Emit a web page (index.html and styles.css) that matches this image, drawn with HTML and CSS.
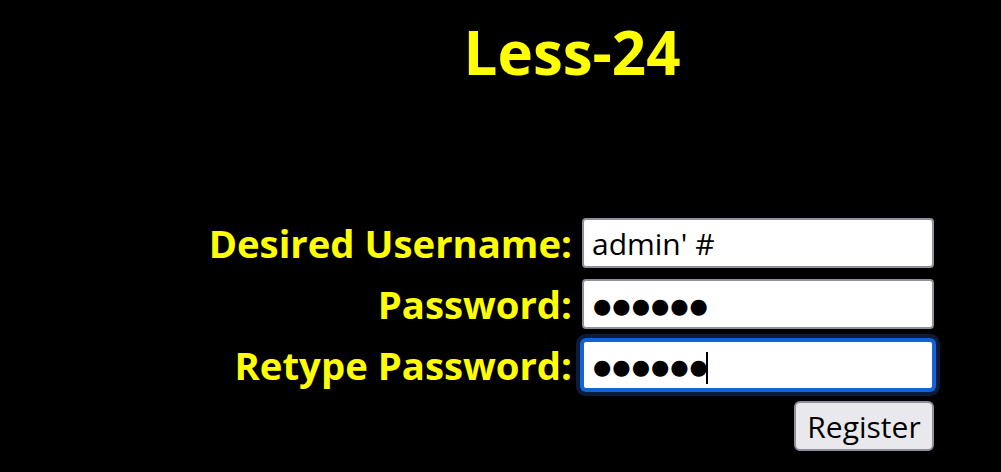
FILE: index.html
```html
<!DOCTYPE html>
<html>
<head>
<meta charset="utf-8">
<link rel="stylesheet" href="styles.css">
</head>
<body>
<div class="page">
  <h1 class="title">Less-24</h1>
  <form class="form">
    <label class="label" for="u">Desired Username:</label>
    <input class="field" id="u" type="text" value="admin' #">
    <label class="label" for="p">Password:</label>
    <input class="field field-dots" id="p" type="text" value="●●●●●●">
    <label class="label" for="r">Retype Password:</label>
    <span class="field-wrap"><input class="field field-dots field-focus" id="r" type="text" value="●●●●●●"><span class="caret"></span></span>
    <span></span>
    <div class="actions"><button class="btn" type="button">Register</button></div>
  </form>
</div>
</body>
</html>
```
FILE: styles.css
```css
html, body {
  margin: 0;
  padding: 0;
  background: #000;
}
.page {
  width: 1001px;
  height: 472px;
  overflow: hidden;
  font-family: "Open Sans", "Noto Sans", sans-serif;
}
.title {
  margin: 0;
  padding: 14px 0 0 143px;
  text-align: center;
  color: #ffff00;
  font-size: 60px;
  font-weight: 700;
  line-height: 76px;
}
.form {
  display: grid;
  grid-template-columns: auto 352px;
  grid-auto-rows: 50px;
  column-gap: 10px;
  row-gap: 11px;
  justify-content: end;
  align-items: center;
  padding: 128px 67px 0 0;
}
.label {
  color: #ffff00;
  font-weight: 700;
  font-size: 38.3px;
  text-align: right;
  line-height: 50px;
}
.field {
  display: block;
  box-sizing: border-box;
  width: 352px;
  height: 50px;
  border: 2px solid #8f8f9d;
  border-radius: 4px;
  background: #fff;
  color: #000;
  font-family: "Open Sans", "Noto Sans", sans-serif;
  font-size: 30px;
  padding: 0 8px;
  outline: none;
  margin: 0;
}
.field-dots {
  font-family: "DejaVu Sans", sans-serif;
  font-size: 21px;
  letter-spacing: 1px;
  padding: 3px 8px 0 9px;
}
.field-wrap {
  position: relative;
  display: block;
  width: 352px;
  height: 50px;
}
.field-focus {
  border-color: #1262d8;
  box-shadow: 0 0 0 2px #1262d8, 0 0 0 6px #0c1b38;
  caret-color: transparent;
}
.caret {
  position: absolute;
  left: 124px;
  top: 12px;
  width: 2px;
  height: 32px;
  background: #000;
}
.actions {
  display: flex;
  justify-content: flex-end;
}
.btn {
  box-sizing: border-box;
  width: 140px;
  height: 50px;
  border: 2px solid #8f8f9d;
  border-radius: 6px;
  background: #e9e9ed;
  color: #000;
  font-family: "Open Sans", "Noto Sans", sans-serif;
  font-size: 30px;
  padding: 0;
}
```
